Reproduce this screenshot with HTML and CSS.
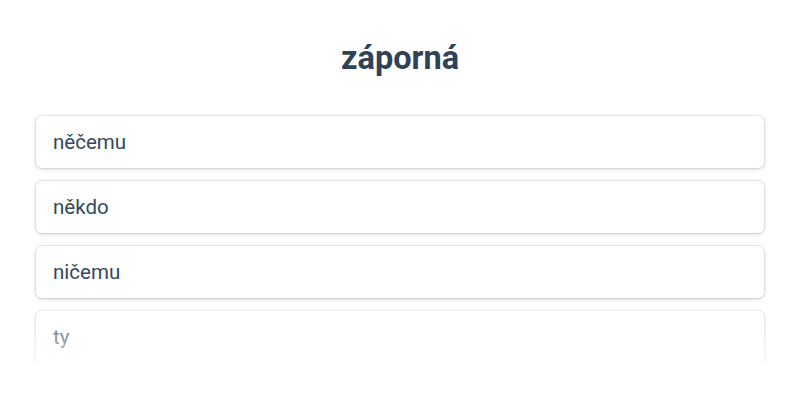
FILE: index.html
```html
<!DOCTYPE html>
<html>
<head>
<meta charset="UTF-8">
<title>záporná</title>
<link rel="stylesheet" href="styles.css">
</head>
<body>
	<div class="container">
		<h1 class="title">záporná</h1>
		<div class="options">
			<div class="option">něčemu</div>
			<div class="option">někdo</div>
			<div class="option">ničemu</div>
			<div class="option option-fade">ty</div>
		</div>
	</div>
</body>
</html>
```

FILE: styles.css
```css
* {
	box-sizing: border-box;
}
body {
	margin: 0;
	background: #ffffff;
	font-family: Roboto, 'Noto Sans', sans-serif;
	color: #34495e;
}
.container {
	padding: 37px 36px 0;
}
.title {
	margin: 0 0 37px;
	text-align: center;
	font-size: 32.5px;
	font-weight: 700;
	line-height: 42px;
	color: #2f4256;
}
.options {
	display: flex;
	flex-direction: column;
	gap: 13px;
}
.option {
	height: 52px;
	padding: 0 17px;
	display: flex;
	align-items: center;
	font-size: 20.5px;
	background: white;
	border-radius: 6px;
	box-shadow: 0 0 0 1px rgba(0,0,0,0.06), 0 1px 4px rgba(0,0,0,0.18);
}
.option-fade {
	position: relative;
}
/* fade the last item out toward the bottom */
.option-fade::after {
	content: "";
	position: absolute;
	top: -2px;
	left: -6px;
	right: -6px;
	bottom: -8px;
	background: linear-gradient(to bottom, rgba(255,255,255,0.15), rgba(255,255,255,0.45) 50%, rgba(255,255,255,0.85));
}
```
